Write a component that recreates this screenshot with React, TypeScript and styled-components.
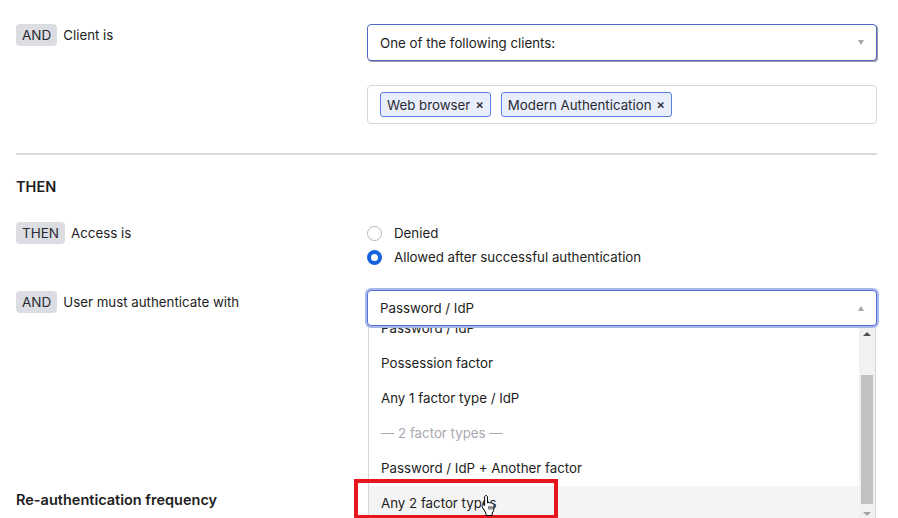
import { useLayoutEffect, useRef } from 'react';
import styled, { createGlobalStyle } from 'styled-components';

const GlobalStyle = createGlobalStyle`
  html, body {
    margin: 0;
    padding: 0;
    background: #fff;
    overflow: hidden;
  }
  body {
    font-family: Inter, 'Noto Sans', 'Liberation Sans', sans-serif;
    font-size: 13.3px;
    color: #1d1d21;
  }
`;

const Page = styled.div`
  position: relative;
  width: 898px;
  height: 518px;
  overflow: hidden;
  padding: 24px 21px 0 16px;
  box-sizing: border-box;
`;

const Row = styled.div<{ $mt?: number }>`
  display: grid;
  grid-template-columns: 351px 1fr;
  margin-top: ${(p) => p.$mt ?? 0}px;
`;

const LeftCell = styled.div`
  display: flex;
  align-items: flex-start;
  gap: 6px;
`;

const RightCell = styled.div`
  display: flex;
  flex-direction: column;
`;

const Pill = styled.span`
  display: inline-flex;
  align-items: center;
  height: 22px;
  padding: 0 6px;
  border-radius: 4px;
  background: #dcdde2;
  font-size: 13.5px;
  color: #2a2a32;
`;

const Label = styled.span`
  line-height: 22px;
  font-size: 13.3px;
  color: #1d1d21;
`;

const Select = styled.div<{ $open?: boolean }>`
  position: relative;
  z-index: 6;
  height: ${(p) => (p.$open ? 34 : 35)}px;
  display: flex;
  align-items: center;
  justify-content: space-between;
  padding: 0 12px;
  border: 1px solid ${(p) => (p.$open ? '#5471d4' : '#5069c4')};
  border-radius: 4px;
  box-shadow: ${(p) => (p.$open ? '0 0 0 2px #a9b7ee' : '1px 1px 0 #9a9aa3')};
  background: #fff;
`;

const Arrow = styled.span`
  width: 0;
  height: 0;
  border-left: 3.5px solid transparent;
  border-right: 3.5px solid transparent;
  border-top: 5px solid #a6a6ae;
`;

const ArrowUp = styled(Arrow)`
  border-top: 0;
  border-bottom: 5px solid #a6a6ae;
`;

const TagBox = styled.div`
  margin-top: 24px;
  height: 37px;
  display: flex;
  align-items: center;
  gap: 10px;
  padding: 0 12px;
  border: 1px solid #d6d6db;
  border-radius: 4px;
`;

const Tag = styled.span`
  display: inline-flex;
  align-items: center;
  gap: 5px;
  height: 23px;
  padding: 0 6px;
  border: 1px solid #5b82e0;
  border-radius: 3px;
  background: #e9eefc;
  font-size: 13.3px;
  color: #2a2a32;
`;

const Close = styled.span`
  font-size: 12.5px;
  font-weight: 600;
  color: #2a2a32;
`;

const Divider = styled.hr`
  margin: 29px 0 0;
  border: 0;
  height: 2px;
  background: #d9d9de;
`;

const Heading = styled.h3<{ $mt: number }>`
  margin: ${(p) => p.$mt}px 0 0;
  font-size: 14.5px;
  line-height: 20px;
  font-weight: 600;
  color: #1d1d21;
`;

const RadioGroup = styled.div`
  display: flex;
  flex-direction: column;
  margin-top: -1px;
`;

const RadioRow = styled.label`
  display: flex;
  align-items: center;
  gap: 12px;
  height: 24px;
  font-size: 13.3px;
  color: #1d1d21;
`;

const RadioDot = styled.span<{ $checked?: boolean }>`
  width: 15px;
  height: 15px;
  box-sizing: border-box;
  border-radius: 50%;
  border: ${(p) => (p.$checked ? '4.5px solid #1662dd' : '1.5px solid #b4b4bb')};
  background: #fff;
`;

const SelectWrap = styled.div`
  position: relative;
  margin-top: -1px;
`;

const Dropdown = styled.div`
  position: absolute;
  top: 32px;
  left: 1px;
  right: 1px;
  height: 200px;
  display: flex;
  background: #fff;
  border-left: 1px solid #d6d6db;
  border-right: 1px solid #d6d6db;
  z-index: 5;
`;

const List = styled.ul`
  flex: 1;
  margin: 0;
  padding: 0;
  list-style: none;
  overflow: hidden;
`;

const Item = styled.li<{ $muted?: boolean; $hover?: boolean }>`
  height: 35px;
  line-height: 35px;
  padding-left: 12px;
  font-size: 13.3px;
  color: ${(p) => (p.$muted ? '#a8a8b1' : '#1d1d21')};
  background: ${(p) => (p.$hover ? '#f4f4f5' : '#fff')};
`;

const Scrollbar = styled.div`
  width: 16px;
  display: flex;
  flex-direction: column;
  padding-top: 3px;
  background: #f1f1f1;
`;

const ScrollBtn = styled.div`
  height: 17px;
  display: flex;
  align-items: center;
  justify-content: center;
`;

const BtnUp = styled.span`
  border-left: 4px solid transparent;
  border-right: 4px solid transparent;
  border-bottom: 4px solid #505050;
`;

const BtnDown = styled.span`
  border-left: 4px solid transparent;
  border-right: 4px solid transparent;
  border-top: 4px solid #a3a3a3;
`;

const Track = styled.div<{ $offset: number }>`
  flex: 1;
  padding: ${(p) => p.$offset}px 2px 0;
`;

const Thumb = styled.div<{ $h: number }>`
  height: ${(p) => p.$h}px;
  background: #c1c1c1;
`;

const Highlight = styled.div`
  position: absolute;
  left: 354px;
  top: 479px;
  width: 204px;
  height: 39px;
  box-sizing: border-box;
  border: 4px solid #e5161e;
  border-bottom-width: 3px;
  z-index: 10;
`;

const Cursor = styled.svg`
  position: absolute;
  left: 481px;
  top: 494px;
  z-index: 11;
`;

const options = [
  { text: '— 1 factor type —', muted: true },
  { text: 'Password / IdP' },
  { text: 'Possession factor' },
  { text: 'Any 1 factor type / IdP' },
  { text: '— 2 factor types —', muted: true },
  { text: 'Password / IdP + Another factor' },
  { text: 'Any 2 factor types', hover: true },
  { text: 'Password / IdP + Possession factor' },
];

function FactorDropdown() {
  const listRef = useRef<HTMLUListElement>(null);
  useLayoutEffect(() => {
    if (listRef.current) listRef.current.scrollTop = 46;
  }, []);
  return (
    <Dropdown>
      <List ref={listRef}>
        {options.map((o) => (
          <Item key={o.text} $muted={o.muted} $hover={o.hover}>
            {o.text}
          </Item>
        ))}
      </List>
      <Scrollbar>
        <ScrollBtn>
          <BtnUp />
        </ScrollBtn>
        <Track $offset={33}>
          <Thumb $h={129} />
        </Track>
        <ScrollBtn>
          <BtnDown />
        </ScrollBtn>
      </Scrollbar>
    </Dropdown>
  );
}

export default function App() {
  return (
    <>
      <GlobalStyle />
      <Page>
        <Row>
          <LeftCell>
            <Pill>AND</Pill>
            <Label>Client is</Label>
          </LeftCell>
          <RightCell>
            <Select>
              <span>One of the following clients:</span>
              <Arrow />
            </Select>
            <TagBox>
              <Tag>
                Web browser <Close>×</Close>
              </Tag>
              <Tag>
                Modern Authentication <Close>×</Close>
              </Tag>
            </TagBox>
          </RightCell>
        </Row>

        <Divider />
        <Heading $mt={22}>THEN</Heading>

        <Row $mt={25}>
          <LeftCell>
            <Pill>THEN</Pill>
            <Label>Access is</Label>
          </LeftCell>
          <RadioGroup>
            <RadioRow>
              <RadioDot />
              Denied
            </RadioRow>
            <RadioRow>
              <RadioDot $checked />
              Allowed after successful authentication
            </RadioRow>
          </RadioGroup>
        </Row>

        <Row $mt={22}>
          <LeftCell>
            <Pill>AND</Pill>
            <Label>User must authenticate with</Label>
          </LeftCell>
          <SelectWrap>
            <Select $open>
              <span>Password / IdP</span>
              <ArrowUp />
            </Select>
            <FactorDropdown />
          </SelectWrap>
        </Row>

        <Heading $mt={164}>Re-authentication frequency</Heading>

        <Highlight />
        <Cursor width="16" height="22" viewBox="0 0 16 22">
          <path
            d="M5 1.5c.8 0 1.5.7 1.5 1.5v6l.5-.1c.6-.6 1.7-.5 2.1.2.6-.5 1.6-.4 2 .3.7-.4 1.6 0 1.8.8.1.6.1 1.8.1 3.3 0 2.7-.8 4.2-1.8 5.5v2.5H5v-2.2L1.3 13c-.5-.7-.3-1.6.4-2 .6-.3 1.4-.2 1.8.4l.1.1V3c0-.8.7-1.5 1.4-1.5z"
            fill="#fff"
            stroke="#000"
            strokeWidth="1"
            strokeLinejoin="round"
          />
          <path d="M8 12v3.5M10 12v3.5M12 12.5v3" stroke="#000" strokeWidth="0.9" />
        </Cursor>
      </Page>
    </>
  );
}
